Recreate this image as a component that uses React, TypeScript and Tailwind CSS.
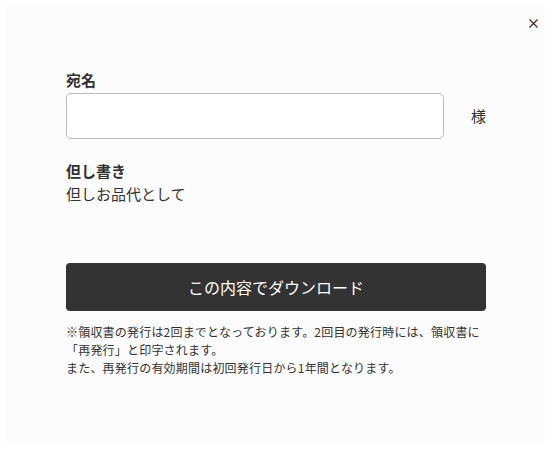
export default function App() {
  return (
    <div
      className="min-h-[449px] w-[550px] bg-white p-[5px] text-[#333]"
      style={{ fontFamily: '"Noto Sans CJK JP", "Noto Sans", sans-serif' }}
    >
      <div className="relative h-[438px] bg-[#fcfcfc] pl-[61px] pr-[59px] pt-[64px]">
        <button
          aria-label="閉じる"
          className="absolute right-[2px] top-[8px] flex h-[20px] w-[20px] items-center justify-center text-[#4a2a2a]"
        >
          <svg width="9" height="9" viewBox="0 0 9 9" fill="none" stroke="currentColor" strokeWidth="1.3">
            <path d="M0.5 0.5 L8.5 8.5 M8.5 0.5 L0.5 8.5" />
          </svg>
        </button>

        <p className="text-[15px] font-bold leading-[22px]">宛名</p>
        <div className="mt-[2px] flex items-center">
          <input
            type="text"
            className="h-[46px] w-[378px] rounded-[5px] border border-[#bbb] bg-white px-3 outline-none"
          />
          <span className="ml-auto text-[15px]">様</span>
        </div>

        <p className="mt-[21px] text-[15px] font-bold leading-[22px]">但し書き</p>
        <p className="mt-[1px] text-[15px] leading-[22px]">但しお品代として</p>

        <button className="mt-[58px] flex h-[48px] w-full items-center justify-center rounded-[4px] bg-[#333] text-[16px] text-white">
          この内容でダウンロード
        </button>

        <div className="mt-[12px] text-[12px] leading-[18px] tracking-[0.2px]">
          <p>
            ※領収書の発行は2回までとなっております。2回目の発行時には、領収書に
            <br />
            「再発行」と印字されます。
          </p>
          <p>また、再発行の有効期間は初回発行日から1年間となります。</p>
        </div>
      </div>
    </div>
  );
}
